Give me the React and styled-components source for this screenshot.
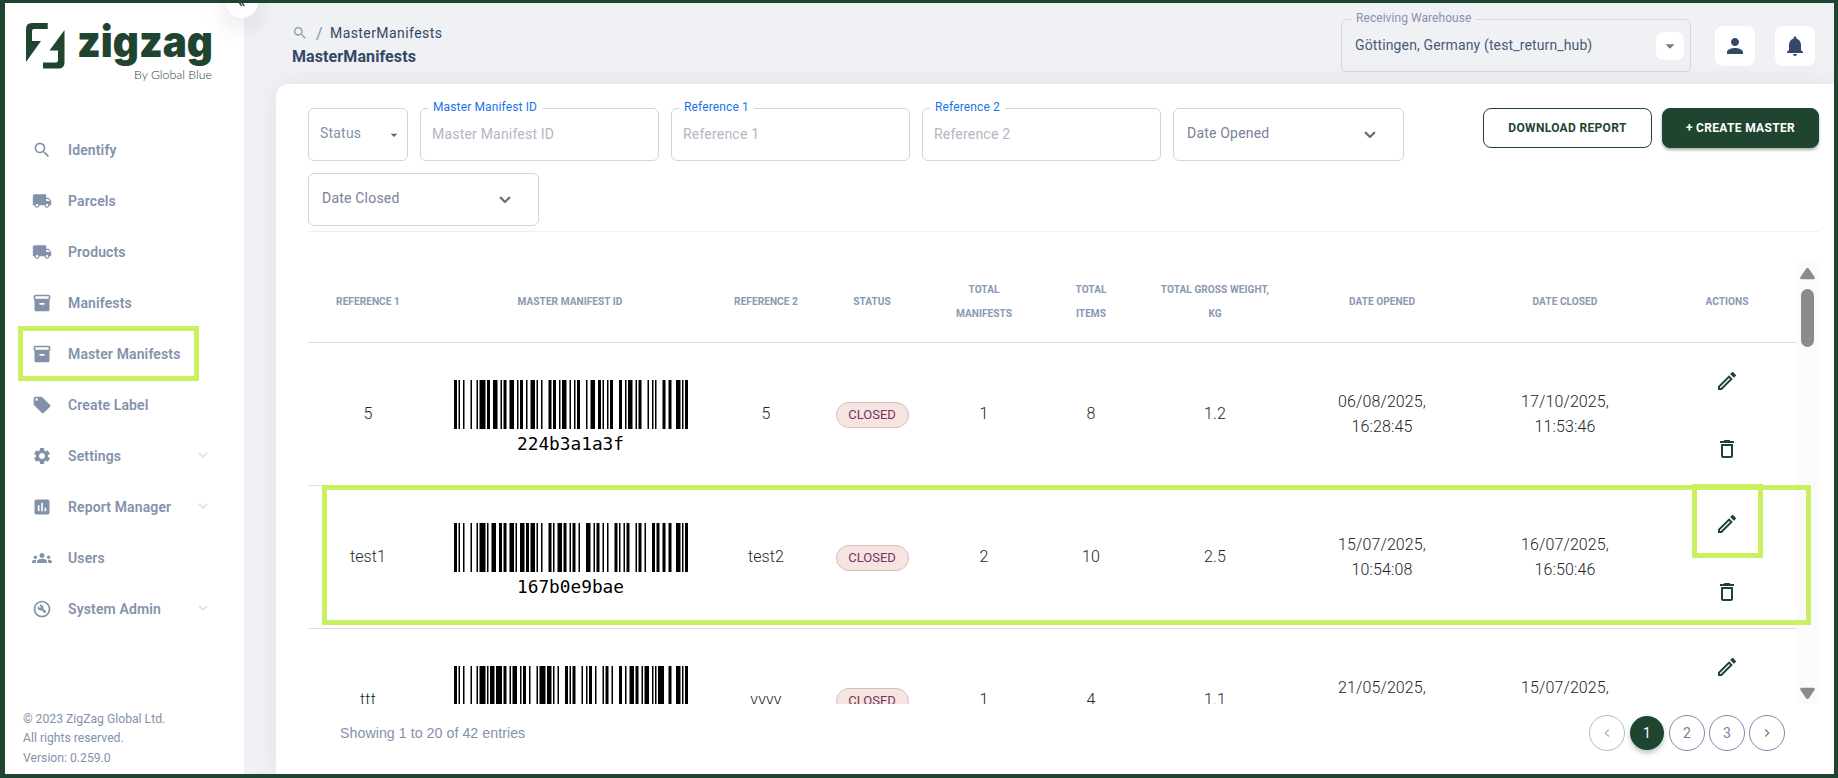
import styled, { createGlobalStyle } from "styled-components";
import {
  MdArrowDropDown,
  MdAssessment,
  MdDeleteOutline,
  MdGroups,
  MdInventory2,
  MdKeyboardArrowLeft,
  MdKeyboardArrowRight,
  MdLocalOffer,
  MdLocalShipping,
  MdNotifications,
  MdOutlineBuildCircle,
  MdOutlineEdit,
  MdPerson,
  MdSearch,
  MdSettings,
} from "react-icons/md";

const GREEN = "#1f4530";
const LIME = "#c8f060";

const GlobalStyle = createGlobalStyle`
  * {
    box-sizing: border-box;
  }

  body {
    margin: 0;
    overflow: hidden;
    font-family: Roboto, "Liberation Sans", sans-serif;
    font-size: 14px;
    color: #344767;
  }
`;

const Frame = styled.div`
  display: flex;
  width: 1838px;
  height: 778px;
  border-style: solid;
  border-color: ${GREEN};
  border-width: 3px 4px 4px 5px;
  overflow: hidden;
  background: #f0f1f5;
`;

/* ---------- sidebar ---------- */

const Sidebar = styled.aside`
  position: relative;
  display: flex;
  flex-direction: column;
  flex: none;
  width: 239px;
  background: #fff;
`;

const Collapse = styled.button`
  position: absolute;
  z-index: 2;
  top: -17px;
  right: -14px;
  width: 32px;
  height: 32px;
  padding: 0;
  border: 0;
  border-radius: 50%;
  background: #fff;
  box-shadow: 0 8px 26px 0 rgba(20, 20, 20, 0.13);
  font: 700 14px/30px Roboto, sans-serif;
  color: #222;
`;

const LogoSvg = styled.svg`
  display: block;
  flex: none;
  margin: 17px 0 0 18px;
`;

const Nav = styled.nav`
  margin-top: 42px;
`;

const NavItem = styled.a`
  position: relative;
  display: flex;
  align-items: center;
  height: 51px;
  padding: 0 36px 0 26px;
  font-weight: 600;
  letter-spacing: 0.13px;
  color: #8392ab;
`;

const NavIcon = styled.span`
  display: flex;
  justify-content: center;
  width: 22px;
  margin-right: 15px;
  padding-top: 1px;
`;

const NavText = styled.span`
  flex: 1;
`;

const NavMark = styled.span`
  position: absolute;
  left: 13px;
  top: -2px;
  width: 181px;
  height: 55px;
  border: 5px solid ${LIME};
`;

const Copyright = styled.p`
  margin: auto 0 6px 18px;
  font-size: 12.2px;
  line-height: 19.4px;
  color: #8392ab;
`;

/* ---------- top bar ---------- */

const Main = styled.main`
  display: flex;
  flex-direction: column;
  flex: 1;
  min-width: 0;
`;

const TopBar = styled.header`
  display: flex;
  align-items: flex-start;
  height: 81px;
  padding: 0 19px 0 48px;
`;

const Titles = styled.div`
  flex: 1;
  padding-top: 19px;
`;

const Crumbs = styled.div`
  display: flex;
  align-items: center;
  height: 22px;
  font-size: 14px;
  letter-spacing: 0.42px;

  svg {
    color: #8f9bb1;
  }
`;

const Slash = styled.span`
  margin: 0 7px 0 8px;
  font-size: 16px;
  color: #8392ab;
`;

const Title = styled.h1`
  margin: 3px 0 0;
  font-size: 16px;
  font-weight: 700;
  line-height: 20px;
  letter-spacing: 0.1px;
`;

const Fieldset = styled.fieldset`
  display: flex;
  align-items: center;
  flex: none;
  width: ${(p) => p.$width}px;
  height: ${(p) => (p.$legend ? 61 : 53)}px;
  margin: ${(p) => (p.$legend ? "-8px" : "0")} 0 0;
  padding: 0 ${(p) => p.$right || 11}px 0 ${(p) => p.$left || 11}px;
  border: 1px solid #d2d6da;
  border-radius: 6px;
  color: ${(p) => p.$color || "#8392ab"};
  min-width: 0;
`;

const Legend = styled.legend`
  margin-left: ${(p) => p.$shift || 0}px;
  padding: 0 5px;
  height: 17px;
  font-size: 12px;
  line-height: 15px;
  letter-spacing: ${(p) => p.$track || 0.13}px;
  color: ${(p) => p.$color || "#1a73e8"};
`;

const FieldText = styled.span`
  flex: 1;
  margin-top: ${(p) => p.$top || 0}px;
  font-size: 14px;
  letter-spacing: ${(p) => p.$track || 0.2}px;
  white-space: nowrap;
`;

const WarehouseSlot = styled.div`
  padding-top: 16px;
`;

const DropBox = styled.span`
  display: flex;
  align-items: center;
  justify-content: center;
  width: 28px;
  height: 28px;
  margin-top: -7px;
  border-radius: 7px;
  background: #fff;
  color: #7b7b7b;
`;

const IconButton = styled.button`
  display: flex;
  align-items: center;
  justify-content: center;
  width: 40px;
  height: 40px;
  margin: 23px 0 0 ${(p) => p.$gap}px;
  padding: 0;
  border: 0;
  border-radius: 8px;
  background: #fff;
  color: #344767;
`;

/* ---------- card ---------- */

const Card = styled.section`
  flex: 1;
  min-height: 0;
  margin-left: 32px;
  padding: 24px 15px 0 32px;
  border-radius: 12px 0 0 0;
  background: #fff;
  box-shadow: 0 0 26px 0 rgba(40, 44, 60, 0.07);
`;

const Toolbar = styled.div`
  display: flex;
  justify-content: space-between;
  height: 124px;
  border-bottom: 1px solid #f0f1f3;
`;

const Filters = styled.div`
  display: flex;
  flex-wrap: wrap;
  align-content: flex-start;
  gap: 12px;
  width: 1110px;
`;

const Buttons = styled.div`
  display: flex;
  gap: 10px;
`;

const Button = styled.button`
  width: ${(p) => p.$width}px;
  height: 40px;
  padding: 0;
  border: 1px solid ${GREEN};
  border-radius: 8px;
  background: ${(p) => (p.$filled ? GREEN : "#fff")};
  box-shadow: ${(p) => (p.$filled ? "0 2px 3px rgba(31, 69, 48, 0.4)" : "none")};
  font: 700 12px/38px Roboto, sans-serif;
  letter-spacing: 0.33px;
  color: ${(p) => (p.$filled ? "#fff" : GREEN)};
`;

const TableArea = styled.div`
  position: relative;
  display: flex;
  height: 442px;
  margin-top: 30px;
`;

const TableClip = styled.div`
  flex: 1;
  overflow: hidden;
`;

const Row = styled.div`
  display: grid;
  grid-template-columns: 120px 284px 108px 104px 120px 94px 154px 180px 186px 138px;
  align-items: center;
  height: ${(p) => (p.$head ? 81 : 143)}px;
  border-bottom: 1px solid #dcdddf;
`;

const HeadCell = styled.div`
  padding: 0 10px;
  text-align: center;
  font-size: 10.1px;
  font-weight: 700;
  line-height: 24px;
  letter-spacing: 0.05px;
  text-transform: uppercase;
  white-space: pre-line;
  color: #8a99b2;
`;

const Cell = styled.div`
  padding: 0 0 1px;
  text-align: center;
  font-size: 16px;
  font-weight: 300;
  line-height: 25px;
  letter-spacing: 0.12px;
  white-space: pre-line;
  color: #212529;
`;

const BarcodeBox = styled.div`
  display: flex;
  flex-direction: column;
  align-items: center;
  padding: 6px 0 0 1px;
`;

const BarcodeText = styled.span`
  margin-top: 5px;
  font-family: "DejaVu Sans Mono", monospace;
  font-size: 17.8px;
  line-height: 20px;
  color: #000;
`;

const Badge = styled.span`
  display: inline-block;
  height: 26px;
  width: 73px;
  margin-top: 3px;
  border: 1px solid #dcbcc0;
  border-radius: 13px;
  background: #f6e4e1;
  font-size: 13px;
  font-weight: 400;
  line-height: 24px;
  letter-spacing: 0;
  color: #74345c;
  vertical-align: top;
`;

const Actions = styled.div`
  display: flex;
  flex-direction: column;
  align-items: center;
  gap: 44px;
  padding-top: 2px;
  color: ${GREEN};
`;

const Scrollbar = styled.div`
  display: flex;
  flex-direction: column;
  align-items: center;
  width: 23px;
  padding: 6px 0 5px;
  background: #fbfbfb;
`;

const Thumb = styled.div`
  width: 13px;
  height: 58px;
  margin: 9px 0 auto;
  border-radius: 7px;
  background: #8b8b8b;
`;

const Mark = styled.div`
  position: absolute;
  left: ${(p) => p.$x}px;
  top: ${(p) => p.$y}px;
  width: ${(p) => p.$w}px;
  height: ${(p) => p.$h}px;
  border: 5px solid ${LIME};
`;

const Footer = styled.div`
  display: flex;
  align-items: center;
  justify-content: space-between;
  height: 58px;
  padding: 0 34px 0 32px;
`;

const Entries = styled.span`
  font-family: "Liberation Sans", Arial, sans-serif;
  font-size: 14.2px;
  letter-spacing: 0.05px;
  color: #8392ab;
`;

const Pages = styled.div`
  display: flex;
  align-items: center;
  gap: 4px;
`;

const Page = styled.button`
  display: flex;
  align-items: center;
  justify-content: center;
  width: ${(p) => (p.$active ? 34 : 36)}px;
  height: ${(p) => (p.$active ? 34 : 36)}px;
  margin: 0 ${(p) => (p.$active ? 1 : 0)}px;
  padding: 0;
  border: ${(p) => (p.$active ? "0" : "1px solid #8286a8")};
  border-radius: 50%;
  background: ${(p) => (p.$active ? GREEN : "#fff")};
  box-shadow: ${(p) => (p.$active ? "0 3px 5px rgba(31, 69, 48, 0.3)" : "none")};
  font: 400 14px Roboto, sans-serif;
  color: ${(p) => (p.$active ? "#fff" : "#7b809a")};
  opacity: ${(p) => (p.$disabled ? 0.6 : 1)};
`;

/* ---------- data ---------- */

const NAV = [
  { label: "Identify", icon: MdSearch },
  { label: "Parcels", icon: MdLocalShipping },
  { label: "Products", icon: MdLocalShipping },
  { label: "Manifests", icon: MdInventory2 },
  { label: "Master Manifests", icon: MdInventory2, marked: true },
  { label: "Create Label", icon: MdLocalOffer },
  { label: "Settings", icon: MdSettings, open: true },
  { label: "Report Manager", icon: MdAssessment, open: true },
  { label: "Users", icon: MdGroups },
  { label: "System Admin", icon: MdOutlineBuildCircle, open: true },
];

const HEADERS = [
  "Reference 1",
  "Master Manifest ID",
  "Reference 2",
  "Status",
  "Total\nManifests",
  "Total\nItems",
  "Total Gross Weight,\nKG",
  "Date Opened",
  "Date Closed",
  "Actions",
];

const ROWS = [
  {
    ref1: "5",
    id: "224b3a1a3f",
    ref2: "5",
    manifests: 1,
    items: 8,
    weight: "1.2",
    opened: "06/08/2025,\n16:28:45",
    closed: "17/10/2025,\n11:53:46",
  },
  {
    ref1: "test1",
    id: "167b0e9bae",
    ref2: "test2",
    manifests: 2,
    items: 10,
    weight: "2.5",
    opened: "15/07/2025,\n10:54:08",
    closed: "16/07/2025,\n16:50:46",
  },
  {
    ref1: "ttt",
    id: "1969bfee43",
    ref2: "vvvv",
    manifests: 1,
    items: 4,
    weight: "1.1",
    opened: "21/05/2025,\n12:14:22",
    closed: "15/07/2025,\n10:22:31",
  },
];

/* ---------- barcode ---------- */

// Code 128 bar/space widths, indexed by symbol value
const CODES =
  "212222 222122 222221 121223 121322 131222 122213 122312 132212 221213 221312 231212 112232 122132 122231 113222 123122 123221 223211 221132 221231 213212 223112 312131 311222 321122 321221 312212 322112 322211 212123 212321 232121 111323 131123 131321 112313 132113 132311 211313 231113 231311 112133 112331 132131 113123 113321 133121 313121 211331 231131 213113 213311 213131 311123 311321 331121 312113 312311 332111 314111 221411 431111 111224 111422 121124 121421 141122 141221 112214 112412 122114 122411 142112 142211 241211 221114 413111 241112 134111 111242 121142 121241 114212 124112 124211 411212 421112 421211 212141 214121 412121 111143 111341 131141 114113 114311 411113 411311 113141 114131 311141 411131 211412 211214 211232 2331112".split(
    " "
  );

const toB = (text) => [...text].map((c) => c.charCodeAt(0) - 32);

function encode(id) {
  const digits = id.match(/^(\d\d){2,}/);
  const run = digits ? digits[0] : "";
  const symbols = [104, ...toB("~")];
  if (run) symbols.push(99, ...run.match(/\d\d/g).map(Number), 100);
  symbols.push(...toB(id.slice(run.length)));
  const sum = symbols.reduce((acc, s, i) => acc + s * (i || 1), 0);
  return [...symbols, sum % 103, 106].map((s) => CODES[s]).join("");
}

function Barcode({ id }) {
  const bars = [];
  let x = 0;
  [...encode(id)].forEach((w, i) => {
    if (i % 2 === 0) bars.push(<rect key={i} x={x} y="0" width={w} height="49" />);
    x += Number(w);
  });
  return (
    <BarcodeBox>
      <svg width="234" height="49" viewBox={`0 0 ${x} 49`} preserveAspectRatio="none">
        {bars}
      </svg>
      <BarcodeText>{id}</BarcodeText>
    </BarcodeBox>
  );
}

/* ---------- parts ---------- */

function Chevron({ width = 11, stroke = 2, color = "#6f6f6f" }) {
  return (
    <svg width={width} height={width * 0.64} viewBox="0 0 11 7" fill="none">
      <path d="M1 1l4.5 4.5L10 1" stroke={color} strokeWidth={stroke} />
    </svg>
  );
}

function Logo() {
  return (
    <LogoSvg width="195" height="62" viewBox="0 0 195 62" fill={GREEN}>
      <path d="M9 3H24.700V9H11q-2 0-2 2V21H18L3 42V9q0-6 6-6z" />
      <path d="M41.500 10V42.500q0 6-6 6H20V42.500H33q2 0 2-2V30.500H26.500z" />
      <text
        x="54"
        y="36.500"
        fontFamily="Inter, sans-serif"
        fontWeight="900"
        fontSize="43"
        textLength="136"
        lengthAdjust="spacingAndGlyphs"
      >
        zigzag
      </text>
      <text
        x="111"
        y="59"
        fontFamily="Lato, sans-serif"
        fontWeight="300"
        fontSize="12"
        textLength="78"
        lengthAdjust="spacingAndGlyphs"
      >
        By Global Blue
      </text>
    </LogoSvg>
  );
}

function DateFilter({ label }) {
  return (
    <Fieldset $width={231} $left={13} $right={27} $color="#7b809a">
      <FieldText $top={-4}>{label}</FieldText>
      <Chevron width={12} />
    </Fieldset>
  );
}

function TextFilter({ label }) {
  return (
    <Fieldset $width={239} $legend $color="#b1b7c4">
      <Legend $shift={-4}>{label}</Legend>
      <FieldText $top={-9}>{label}</FieldText>
    </Fieldset>
  );
}

function Arrow({ down }) {
  return (
    <svg width="15" height="12" viewBox="0 0 15 12" fill="#8b8b8b">
      <path
        d="M7.500 0q1 0 1.800 1.200L14.500 9q1 2-1 2.300H1.500q-2-.3-1-2.300L5.700 1.200Q6.500 0 7.500 0z"
        transform={down ? "rotate(180 7.500 6)" : undefined}
      />
    </svg>
  );
}

function App() {
  return (
    <>
      <GlobalStyle />
      <Frame>
        <Sidebar>
          <Collapse>«</Collapse>
          <Logo />
          <Nav>
            {NAV.map(({ label, icon: Icon, marked, open }) => (
              <NavItem key={label}>
                <NavIcon>
                  <Icon size={20} />
                </NavIcon>
                <NavText>{label}</NavText>
                {open && <Chevron width={10} color="#dfe3e9" />}
                {marked && <NavMark />}
              </NavItem>
            ))}
          </Nav>
          <Copyright>
            © 2023 ZigZag Global Ltd.
            <br />
            All rights reserved.
            <br />
            Version: 0.259.0
          </Copyright>
        </Sidebar>

        <Main>
          <TopBar>
            <Titles>
              <Crumbs>
                <MdSearch size={16} />
                <Slash>/</Slash>
                MasterManifests
              </Crumbs>
              <Title>MasterManifests</Title>
            </Titles>
            <WarehouseSlot>
              <Fieldset $width={350} $legend $left={13} $right={6} $color="#4a5a78">
                <Legend $shift={-4} $color="#8b8fae" $track={0.06}>
                  Receiving Warehouse
                </Legend>
                <FieldText $top={-9} $track={0.13}>
                  Göttingen, Germany (test_return_hub)
                </FieldText>
                <DropBox>
                  <MdArrowDropDown size={22} />
                </DropBox>
              </Fieldset>
            </WarehouseSlot>
            <IconButton $gap={24}>
              <MdPerson size={24} />
            </IconButton>
            <IconButton $gap={20}>
              <MdNotifications size={24} />
            </IconButton>
          </TopBar>

          <Card>
            <Toolbar>
              <Filters>
                <Fieldset $width={100} $right={5}>
                  <FieldText $top={-4}>Status</FieldText>
                  <MdArrowDropDown size={16} color="#666" />
                </Fieldset>
                <TextFilter label="Master Manifest ID" />
                <TextFilter label="Reference 1" />
                <TextFilter label="Reference 2" />
                <DateFilter label="Date Opened" />
                <DateFilter label="Date Closed" />
              </Filters>
              <Buttons>
                <Button $width={169}>DOWNLOAD REPORT</Button>
                <Button $width={157} $filled>
                  + CREATE MASTER
                </Button>
              </Buttons>
            </Toolbar>

            <TableArea>
              <TableClip>
                <Row $head>
                  {HEADERS.map((h) => (
                    <HeadCell key={h}>{h}</HeadCell>
                  ))}
                </Row>
                {ROWS.map((row) => (
                  <Row key={row.id}>
                    <Cell>{row.ref1}</Cell>
                    <Barcode id={row.id} />
                    <Cell>{row.ref2}</Cell>
                    <Cell>
                      <Badge>CLOSED</Badge>
                    </Cell>
                    <Cell>{row.manifests}</Cell>
                    <Cell>{row.items}</Cell>
                    <Cell>{row.weight}</Cell>
                    <Cell>{row.opened}</Cell>
                    <Cell>{row.closed}</Cell>
                    <Actions>
                      <MdOutlineEdit size={24} />
                      <MdDeleteOutline size={24} />
                    </Actions>
                  </Row>
                ))}
              </TableClip>
              <Scrollbar>
                <Arrow />
                <Thumb />
                <Arrow down />
              </Scrollbar>
              <Mark $x={14} $y={223} $w={1489} $h={140} />
              <Mark $x={1384} $y={222} $w={71} $h={74} />
            </TableArea>

            <Footer>
              <Entries>Showing 1 to 20 of 42 entries</Entries>
              <Pages>
                <Page $disabled>
                  <MdKeyboardArrowLeft size={16} />
                </Page>
                <Page $active>1</Page>
                <Page>2</Page>
                <Page>3</Page>
                <Page>
                  <MdKeyboardArrowRight size={16} />
                </Page>
              </Pages>
            </Footer>
          </Card>
        </Main>
      </Frame>
    </>
  );
}

export default App;
